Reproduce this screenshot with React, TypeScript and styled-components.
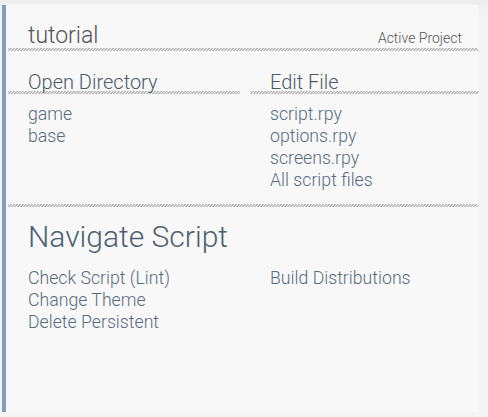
import styled, { createGlobalStyle } from 'styled-components'

const GlobalStyle = createGlobalStyle`
  html, body {
    margin: 0;
    padding: 0;
    background: #f2f2f2;
  }
  body {
    font-family: 'Roboto Light', Roboto, 'Liberation Sans', sans-serif;
    font-weight: 300;
  }
`

const hatch = `repeating-linear-gradient(135deg, #b9b9b9 0 1px, transparent 1px 2.12px)`

const Page = styled.div`
  width: 488px;
  height: 417px;
  box-sizing: border-box;
  padding: 5px 10px 5px 2px;
  background: linear-gradient(#ececec, #f4f4f4 12px);
`

const Panel = styled.div`
  height: 100%;
  border-left: 4px solid #7d9fbb;
  background: #f8f8f8;
`

const TitleRow = styled.div`
  display: flex;
  justify-content: space-between;
  align-items: baseline;
  padding: 18px 16px 0 22px;
  line-height: 25px;
  background: ${hatch} left 2px bottom / calc(100% - 2px) 3px no-repeat;
`

const Title = styled.h1`
  margin: 0;
  font-size: 23px;
  font-weight: 300;
  color: #545454;
`

const Tag = styled.span`
  font-size: 14px;
  color: #555;
`

const Columns = styled.div`
  display: grid;
  grid-template-columns: 234px 1fr;
  column-gap: 8px;
`

const Column = styled.div`
  display: flex;
  flex-direction: column;
`

const Heading = styled.h2`
  margin: 19px 0 0;
  padding-left: 22px;
  font-size: 20px;
  font-weight: 300;
  line-height: 24px;
  color: #4b5a68;
  background: ${hatch} left 2px bottom / calc(100% - 2px) 3px no-repeat;
`

const Links = styled.div<{ $top: number }>`
  display: flex;
  flex-direction: column;
  align-items: flex-start;
  margin-top: ${(p) => p.$top}px;
  padding-left: 22px;
`

const Link = styled.a`
  font-size: 17.7px;
  line-height: 22px;
  color: #586c7f;
  text-decoration: none;
  cursor: pointer;
`

const Divider = styled.div`
  height: 3px;
  margin: 13px 0 0 2px;
  background: ${hatch};
`

const BigHeading = styled.h2`
  margin: 12px 0 0;
  padding-left: 22px;
  font-size: 30px;
  font-weight: 300;
  line-height: 36px;
  color: #4d6072;
`

export default function App() {
  return (
    <>
      <GlobalStyle />
      <Page>
        <Panel>
          <TitleRow>
            <Title>tutorial</Title>
            <Tag>Active Project</Tag>
          </TitleRow>

          <Columns>
            <Column>
              <Heading>Open Directory</Heading>
              <Links $top={9}>
                <Link>game</Link>
                <Link>base</Link>
              </Links>
            </Column>
            <Column>
              <Heading>Edit File</Heading>
              <Links $top={9}>
                <Link>script.rpy</Link>
                <Link>options.rpy</Link>
                <Link>screens.rpy</Link>
                <Link>All script files</Link>
              </Links>
            </Column>
          </Columns>

          <Divider />
          <BigHeading>Navigate Script</BigHeading>

          <Columns>
            <Links $top={12}>
              <Link>Check Script (Lint)</Link>
              <Link>Change Theme</Link>
              <Link>Delete Persistent</Link>
            </Links>
            <Links $top={12}>
              <Link>Build Distributions</Link>
            </Links>
          </Columns>
        </Panel>
      </Page>
    </>
  )
}
